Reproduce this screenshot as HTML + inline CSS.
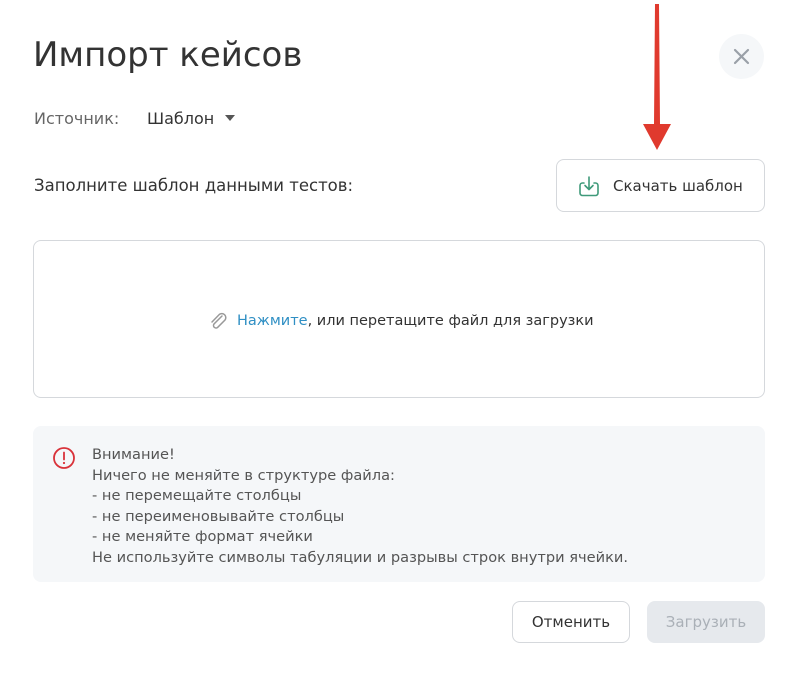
<!DOCTYPE html>
<html><head><meta charset="utf-8"><style>
*{box-sizing:border-box;margin:0;padding:0}
body{width:797px;height:675px;background:#fff;font-family:"DejaVu Sans","Liberation Sans",sans-serif;color:#333;position:relative;overflow:hidden}
.abs{position:absolute}
h1{position:absolute;left:33px;top:35px;font-size:34px;font-weight:400;color:#333}
.close{left:719px;top:34px;width:45px;height:45px;border-radius:50%;background:#f5f7f9}
.btn{position:absolute;border:1px solid #d5d8dc;border-radius:8px;background:#fff;font-size:15px;color:#333;display:flex;align-items:center;justify-content:center}
</style></head><body>
<h1>Импорт кейсов</h1>
<div class="abs close"><svg width="45" height="45" viewBox="0 0 45 45"><path d="M16 16L29 29M29 16L16 29" stroke="#9aa0a8" stroke-width="2.2" stroke-linecap="round"/></svg></div>
<div class="abs" style="left:34px;top:109px;font-size:16px;color:#666">Источник:</div>
<div class="abs" style="left:147px;top:109px;font-size:16px;color:#333">Шаблон</div>
<svg class="abs" style="left:225px;top:115px" width="10" height="6"><path d="M0 0H10L5 6Z" fill="#555"/></svg>
<div class="abs" style="left:34px;top:176px;font-size:16.5px;color:#333">Заполните шаблон данными тестов:</div>
<div class="btn" style="left:556px;top:159px;width:209px;height:53px;justify-content:flex-start;padding-left:20px">
<svg width="24" height="24" viewBox="0 0 24 24" style="margin-right:12px"><path d="M7 9H5.5A2.5 2.5 0 0 0 3 11.5V19a2.5 2.5 0 0 0 2.5 2.5h13A2.5 2.5 0 0 0 21 19v-7.5A2.5 2.5 0 0 0 18.5 9H17M12 3v12M8 11.5l4 4 4-4" fill="none" stroke="#3f9a7a" stroke-width="1.6" stroke-linecap="round" stroke-linejoin="round"/></svg>Скачать шаблон</div>
<svg class="abs" style="left:640px;top:0" width="34" height="152"><path d="M15 4L19 4L20 124L31 124L17 150L3 124L14 124Z" fill="#e03a2e"/></svg>
<div class="abs" style="left:33px;top:240px;width:732px;height:158px;border:1px solid #d5d8dc;border-radius:8px"></div>
<div class="abs" style="left:207px;top:311px;font-size:14.5px;color:#333;display:flex;align-items:center">
<svg width="24" height="20" viewBox="0 0 24 20" style="margin-right:6px"><path d="M15 5L7 13a2.5 2.5 0 0 0 3.5 3.5L18 9a4 4 0 0 0-5.6-5.6L5 11" fill="none" stroke="#999" stroke-width="1.5" stroke-linecap="round"/></svg><span style="color:#2f8fc4">Нажмите</span>, или перетащите файл для загрузки</div>
<div class="abs" style="left:33px;top:426px;width:732px;height:156px;background:#f5f7f9;border-radius:8px"></div>
<svg class="abs" style="left:52px;top:446px" width="24" height="24"><circle cx="12" cy="12" r="10" fill="none" stroke="#d9323a" stroke-width="1.8"/><path d="M12 6.5V13.5" stroke="#d9323a" stroke-width="1.8" stroke-linecap="round"/><circle cx="12" cy="17" r="1.1" fill="#d9323a"/></svg>
<div class="abs" style="left:92px;top:445px;font-size:14.6px;line-height:20.5px;color:#555">Внимание!<br>Ничего не меняйте в структуре файла:<br>- не перемещайте столбцы<br>- не переименовывайте столбцы<br>- не меняйте формат ячейки<br>Не используйте символы табуляции и разрывы строк внутри ячейки.</div>
<div class="btn" style="left:512px;top:601px;width:118px;height:42px">Отменить</div>
<div class="btn" style="left:647px;top:601px;width:118px;height:42px;background:#e6e9ed;border-color:#e6e9ed;color:#aab0b7">Загрузить</div>
</body></html>
